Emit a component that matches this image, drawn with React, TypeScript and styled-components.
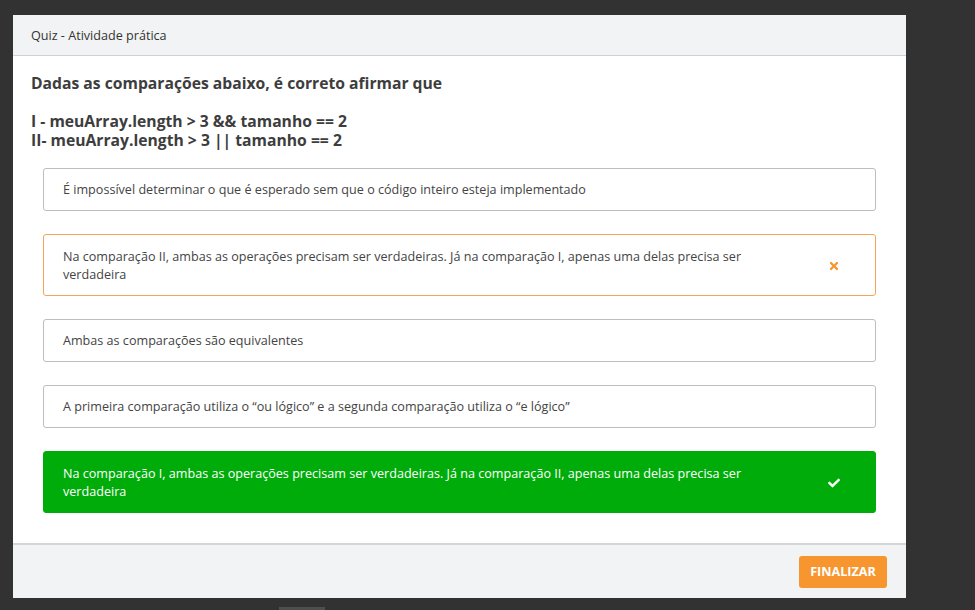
import React from "react";
import styled, { createGlobalStyle, css } from "styled-components";
import { FaTimes, FaCheck } from "react-icons/fa";

const Global = createGlobalStyle`
  html, body { margin: 0; padding: 0; background: #323232; }
  body { font-family: "Open Sans", "Liberation Sans", sans-serif; }
  * { box-sizing: border-box; }
`;

const Page = styled.div`
  width: 975px;
  height: 610px;
  padding: 15px 0 0 13px;
  overflow: hidden;
`;

const Modal = styled.div`
  width: 893px;
  height: 583px;
  background: #fff;
  display: flex;
  flex-direction: column;
`;

const Header = styled.div`
  height: 41px;
  background: #f2f3f4;
  border-bottom: 1px solid #cfd1d3;
  display: flex;
  align-items: center;
  padding: 0 18px;
  font-size: 12.6px;
  color: #333;
`;

const Body = styled.div`
  flex: 1;
  padding: 18px 18px 0;
`;

const Question = styled.div`
  font-size: 15.7px;
  font-weight: 700;
  line-height: 19px;
  color: #3d3d3d;
  margin-bottom: 18px;
`;

const Options = styled.div`
  display: flex;
  flex-direction: column;
  gap: 23px;
  margin: 0 12px;
`;

type State = "none" | "wrong" | "right";

const Option = styled.div<{ $state: State }>`
  display: flex;
  align-items: center;
  padding: 12px 0 11px 19px;
  border: 1px solid #bdbdbd;
  border-radius: 3px;
  font-size: 12.6px;
  line-height: 18px;
  color: #444;
  ${(p) =>
    p.$state === "wrong" &&
    css`
      border-color: #f2a557;
    `}
  ${(p) =>
    p.$state === "right" &&
    css`
      border-color: #00ac0a;
      background: #00ac0a;
      color: #fff;
    `}
`;

const OptionText = styled.div`
  width: 700px;
`;

const IconCell = styled.div<{ $color: string }>`
  flex: 1;
  min-height: 37px;
  display: flex;
  align-items: center;
  justify-content: center;
  color: ${(p) => p.$color};
  font-size: 12px;
  padding-left: 30px;
`;

const Footer = styled.div`
  height: 55px;
  background: #f2f3f4;
  border-top: 2px solid #d3d5d7;
  display: flex;
  justify-content: flex-end;
  align-items: center;
  padding: 0 19px 0 0;
`;

const Button = styled.button`
  height: 32px;
  width: 88px;
  border: none;
  border-radius: 3px;
  background: #f7962e;
  color: #fff;
  font-family: "Open Sans", "Liberation Sans", sans-serif;
  font-weight: 700;
  font-size: 12.6px;
  cursor: pointer;
`;

const Stub = styled.div`
  margin: 9px 0 0 266px;
  width: 46px;
  height: 3px;
  background: #4e4e4e;
`;

const options: { text: string; state: State }[] = [
  {
    text: "É impossível determinar o que é esperado sem que o código inteiro esteja implementado",
    state: "none",
  },
  {
    text: "Na comparação II, ambas as operações precisam ser verdadeiras. Já na comparação I, apenas uma delas precisa ser verdadeira",
    state: "wrong",
  },
  { text: "Ambas as comparações são equivalentes", state: "none" },
  {
    text: "A primeira comparação utiliza o “ou lógico” e a segunda comparação utiliza o “e lógico”",
    state: "none",
  },
  {
    text: "Na comparação I, ambas as operações precisam ser verdadeiras. Já na comparação II, apenas uma delas precisa ser verdadeira",
    state: "right",
  },
];

export default function App() {
  return (
    <>
      <Global />
      <Page>
        <Modal>
          <Header>Quiz - Atividade prática</Header>
          <Body>
            <Question>
              Dadas as comparações abaixo, é correto afirmar que
              <br />
              <br />
              I - meuArray.length &gt; 3 &amp;&amp; tamanho == 2
              <br />
              II- meuArray.length &gt; 3 || tamanho == 2
            </Question>
            <Options>
              {options.map((o, i) => (
                <Option key={i} $state={o.state}>
                  <OptionText>{o.text}</OptionText>
                  {o.state === "wrong" && (
                    <IconCell $color="#f7962e">
                      <FaTimes />
                    </IconCell>
                  )}
                  {o.state === "right" && (
                    <IconCell $color="#fff">
                      <FaCheck />
                    </IconCell>
                  )}
                </Option>
              ))}
            </Options>
          </Body>
          <Footer>
            <Button>FINALIZAR</Button>
          </Footer>
        </Modal>
        <Stub />
      </Page>
    </>
  );
}
